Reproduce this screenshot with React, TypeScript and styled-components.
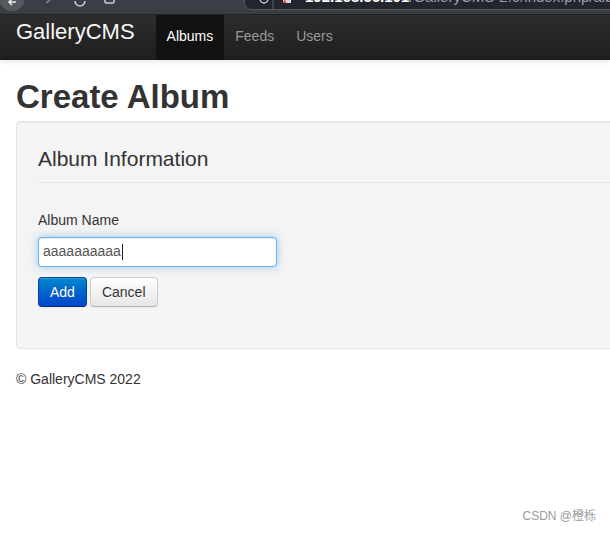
import React from "react";
import styled, {createGlobalStyle} from "styled-components";

const GlobalStyle = createGlobalStyle`
  html, body {
    margin: 0;
    padding: 0;
    overflow: hidden;
    background: #ffffff;
  }
  body {
    font-family: "Liberation Sans", Helvetica, Arial, sans-serif;
    font-size: 14px;
    line-height: 20px;
    color: #333333;
  }
  * {
    box-sizing: border-box;
  }
`;

const Page = styled.div`
    position: relative;
    width: 610px;
    height: 534px;
    overflow: hidden;
`;

const BrowserBar = styled.div`
    height: 15px;
    display: flex;
    align-items: flex-start;
    background: #3b3e45;
    border-bottom: 1px solid #222428;
    overflow: hidden;
`;

const BrowserButtons = styled.svg`
    flex: none;
    display: block;
`;

const AddressBar = styled.div`
    flex: 1;
    height: 10px;
    margin-left: 126px;
    display: flex;
    align-items: flex-start;
    background: #24262d;
    border: 1px solid #54575e;
    border-top: none;
    border-right: none;
    border-radius: 0 0 0 7px;
    overflow: hidden;
    white-space: nowrap;
`;

const AddressIcons = styled.svg`
    flex: none;
    display: block;
    margin-left: 12px;
`;

const Url = styled.div`
    margin-left: 8px;
    margin-top: -13px;
    font-size: 15px;
    line-height: 20px;
    color: #9b9ea6;
    b {
      color: #ffffff;
      font-weight: bold;
    }
`;

const Navbar = styled.div`
    height: 45px;
    display: flex;
    align-items: stretch;
    background: linear-gradient(#2d2d2d, #1e1e1e);
    box-shadow: 0 1px 6px rgba(0, 0, 0, 0.12);
`;

const Brand = styled.a`
    align-self: flex-start;
    padding: 5px 0 0 16px;
    margin-right: 21px;
    font-size: 22px;
    line-height: 24px;
    color: #f6f6f6;
    text-decoration: none;
`;

const NavList = styled.ul`
    display: flex;
    margin: 0;
    padding: 0;
    list-style: none;
`;

const NavLink = styled.li<{active?: boolean}>`
    padding: 11px 11px 0;
    line-height: 20px;
    font-size: 14px;
    color: ${(props) => (props.active ? "#ffffff" : "#999999")};
    background: ${(props) => (props.active ? "#121212" : "transparent")};
`;

const Container = styled.div`
    padding-left: 16px;
`;

const PageTitle = styled.h1`
    margin: 17px 0 4px;
    font-size: 33px;
    line-height: 40px;
    font-weight: bold;
    color: #333333;
`;

const Well = styled.div`
    width: 940px;
    padding: 17px 21px 41px;
    background: #f4f4f4;
    border: 1px solid #e3e3e3;
    border-radius: 4px;
    box-shadow: inset 0 1px 1px rgba(0, 0, 0, 0.05);
`;

const Legend = styled.div`
    padding-bottom: 3px;
    margin-bottom: 27px;
    font-size: 21px;
    line-height: 40px;
    color: #333333;
    border-bottom: 1px solid #e5e5e5;
`;

const Label = styled.label`
    display: block;
    margin-bottom: 7px;
    font-size: 14px;
    line-height: 20px;
`;

const FakeInput = styled.div`
    width: 239px;
    height: 30px;
    display: flex;
    align-items: center;
    padding: 0 4px 3px;
    background: #ffffff;
    border: 1px solid rgba(82, 168, 236, 0.85);
    border-radius: 4px;
    box-shadow: inset 0 1px 1px rgba(0, 0, 0, 0.075), 0 0 8px rgba(82, 168, 236, 0.6);
    color: #555555;
    font-size: 14px;
    line-height: 20px;
`;

const Caret = styled.span`
    display: inline-block;
    width: 1px;
    height: 16px;
    margin-left: 1px;
    margin-top: 3px;
    background: #222222;
`;

const Actions = styled.div`
    display: flex;
    gap: 3px;
    margin-top: 10px;
`;

const Button = styled.button<{primary?: boolean}>`
    height: 30px;
    padding: 0 11px;
    font-family: inherit;
    font-size: 14px;
    line-height: 20px;
    border-radius: 4px;
    cursor: pointer;
    color: ${(props) => (props.primary ? "#ffffff" : "#333333")};
    background: ${(props) =>
        props.primary
            ? "linear-gradient(#0088cc, #0044cc)"
            : "linear-gradient(#ffffff, #e6e6e6)"};
    border: 1px solid ${(props) => (props.primary ? "#0044aa" : "#cccccc")};
    border-bottom-color: ${(props) => (props.primary ? "#002a80" : "#b3b3b3")};
    box-shadow: inset 0 1px 0 rgba(255, 255, 255, 0.2), 0 1px 2px rgba(0, 0, 0, 0.05);
    text-shadow: ${(props) =>
        props.primary ? "0 -1px 0 rgba(0,0,0,0.25)" : "0 1px 1px rgba(255,255,255,0.75)"};
`;

const Footer = styled.footer`
    margin-top: 20px;
    font-size: 14px;
    line-height: 20px;
    color: #333333;
`;

const Watermark = styled.div`
    position: absolute;
    right: 14px;
    top: 508px;
    font-family: "Liberation Sans", "Noto Sans CJK SC", sans-serif;
    font-size: 12px;
    line-height: 16px;
    color: #9a9a9a;
`;

const App = () => {
    return (
        <Page>
            <GlobalStyle/>
            <BrowserBar>
                <BrowserButtons width="118" height="14" viewBox="0 0 118 14">
                    <circle cx="12" cy="-2" r="13" fill="#55585f"/>
                    <path d="M16 2 L9 2 M12 -1 L9 2 L12 5" stroke="#e8e8e8" strokeWidth="1.6" fill="none"/>
                    <path d="M46 3 L50 0" stroke="#8a8d94" strokeWidth="1.4" fill="none"/>
                    <path d="M75 1 A5 5 0 0 0 85 1" stroke="#c9cbd0" strokeWidth="1.6" fill="none"/>
                    <rect x="105" y="-3" width="9" height="6" rx="1" fill="none" stroke="#c9cbd0" strokeWidth="1.5"/>
                </BrowserButtons>
                <AddressBar>
                    <AddressIcons width="40" height="10" viewBox="0 0 40 10">
                        <circle cx="7" cy="-1" r="4" fill="none" stroke="#bfc1c6" strokeWidth="1.4"/>
                        <line x1="16" y1="0" x2="16" y2="10" stroke="#5b5e66" strokeWidth="1"/>
                        <rect x="26" y="-2" width="8" height="5" fill="#d9d9de"/>
                        <path d="M26 3 L28 -1 L29 3 Z" fill="#e03040"/>
                    </AddressIcons>
                    <Url><b>192.168.56.101</b>/GalleryCMS-2.0/index.php/album/create</Url>
                </AddressBar>
            </BrowserBar>
            <Navbar>
                <Brand href="#">GalleryCMS</Brand>
                <NavList>
                    <NavLink active>Albums</NavLink>
                    <NavLink>Feeds</NavLink>
                    <NavLink>Users</NavLink>
                </NavList>
            </Navbar>
            <Container>
                <PageTitle>Create Album</PageTitle>
                <Well>
                    <Legend>Album Information</Legend>
                    <Label>Album Name</Label>
                    <FakeInput>aaaaaaaaaa<Caret/></FakeInput>
                    <Actions>
                        <Button primary>Add</Button>
                        <Button>Cancel</Button>
                    </Actions>
                </Well>
                <Footer>© GalleryCMS 2022</Footer>
            </Container>
            <Watermark>CSDN @橙栎</Watermark>
        </Page>
    );
};

export default App;
